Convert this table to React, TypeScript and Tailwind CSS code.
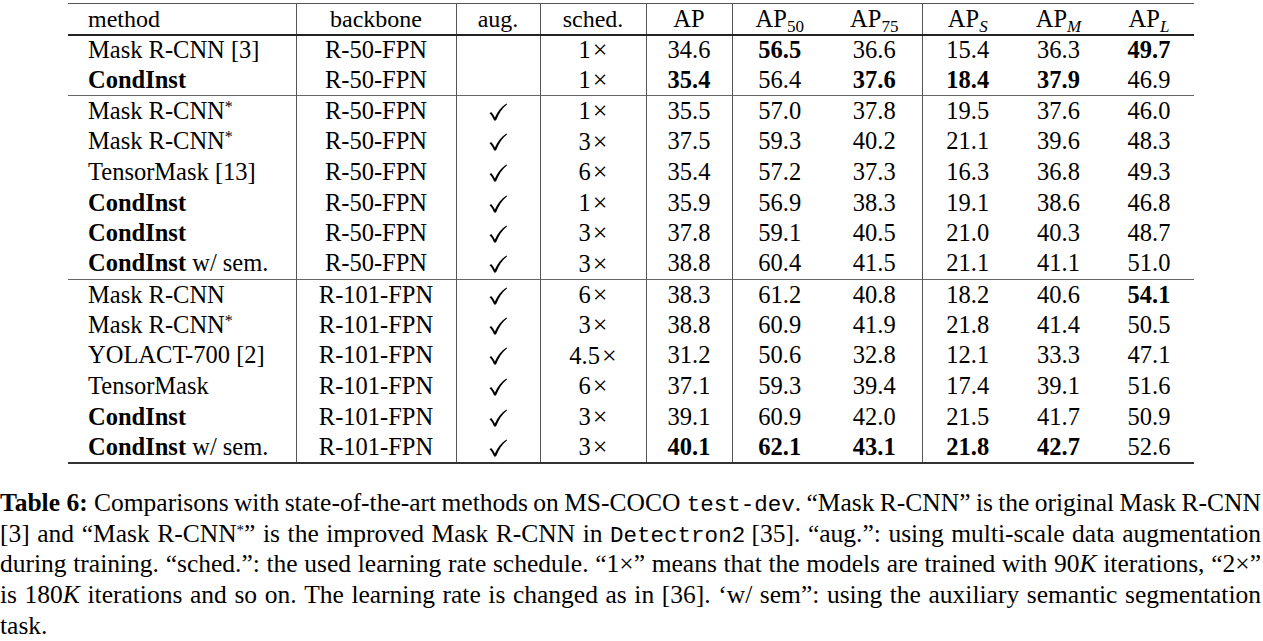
import React from "react";

type Cell = { t: string; b?: boolean };
type Row = {
  m: string;
  mb?: boolean;
  suffix?: string;
  bb: string;
  aug: boolean;
  s: string;
  v: Cell[];
};

const c = (t: string, b = false): Cell => ({ t, b });

const groups: Row[][] = [
  [
    { m: "Mask R-CNN [3]", bb: "R-50-FPN", aug: false, s: "1", v: [c("34.6"), c("56.5", true), c("36.6"), c("15.4"), c("36.3"), c("49.7", true)] },
    { m: "CondInst", mb: true, bb: "R-50-FPN", aug: false, s: "1", v: [c("35.4", true), c("56.4"), c("37.6", true), c("18.4", true), c("37.9", true), c("46.9")] },
  ],
  [
    { m: "Mask R-CNN*", bb: "R-50-FPN", aug: true, s: "1", v: [c("35.5"), c("57.0"), c("37.8"), c("19.5"), c("37.6"), c("46.0")] },
    { m: "Mask R-CNN*", bb: "R-50-FPN", aug: true, s: "3", v: [c("37.5"), c("59.3"), c("40.2"), c("21.1"), c("39.6"), c("48.3")] },
    { m: "TensorMask [13]", bb: "R-50-FPN", aug: true, s: "6", v: [c("35.4"), c("57.2"), c("37.3"), c("16.3"), c("36.8"), c("49.3")] },
    { m: "CondInst", mb: true, bb: "R-50-FPN", aug: true, s: "1", v: [c("35.9"), c("56.9"), c("38.3"), c("19.1"), c("38.6"), c("46.8")] },
    { m: "CondInst", mb: true, bb: "R-50-FPN", aug: true, s: "3", v: [c("37.8"), c("59.1"), c("40.5"), c("21.0"), c("40.3"), c("48.7")] },
    { m: "CondInst", mb: true, suffix: " w/ sem.", bb: "R-50-FPN", aug: true, s: "3", v: [c("38.8"), c("60.4"), c("41.5"), c("21.1"), c("41.1"), c("51.0")] },
  ],
  [
    { m: "Mask R-CNN", bb: "R-101-FPN", aug: true, s: "6", v: [c("38.3"), c("61.2"), c("40.8"), c("18.2"), c("40.6"), c("54.1", true)] },
    { m: "Mask R-CNN*", bb: "R-101-FPN", aug: true, s: "3", v: [c("38.8"), c("60.9"), c("41.9"), c("21.8"), c("41.4"), c("50.5")] },
    { m: "YOLACT-700 [2]", bb: "R-101-FPN", aug: true, s: "4.5", v: [c("31.2"), c("50.6"), c("32.8"), c("12.1"), c("33.3"), c("47.1")] },
    { m: "TensorMask", bb: "R-101-FPN", aug: true, s: "6", v: [c("37.1"), c("59.3"), c("39.4"), c("17.4"), c("39.1"), c("51.6")] },
    { m: "CondInst", mb: true, bb: "R-101-FPN", aug: true, s: "3", v: [c("39.1"), c("60.9"), c("42.0"), c("21.5"), c("41.7"), c("50.9")] },
    { m: "CondInst", mb: true, suffix: " w/ sem.", bb: "R-101-FPN", aug: true, s: "3", v: [c("40.1", true), c("62.1", true), c("43.1", true), c("21.8", true), c("42.7", true), c("52.6")] },
  ],
];

function MethodName({ r }: { r: Row }) {
  const star = r.m.endsWith("*");
  const base = star ? r.m.slice(0, -1) : r.m;
  return (
    <span>
      <span className={r.mb ? "font-bold" : ""}>{base}</span>
      {star && <span className="relative top-[-7px] text-[16px] leading-none">*</span>}
      {r.suffix && <span>{r.suffix}</span>}
    </span>
  );
}

function Sub({ children, italic }: { children: React.ReactNode; italic?: boolean }) {
  return (
    <span className={"relative top-[5px] text-[17px] leading-none " + (italic ? "italic" : "")}>{children}</span>
  );
}

function Check() {
  return (
    <svg width="20" height="20" viewBox="0 0 20 20" className="inline-block align-[-3px]">
      <path
        d="M1.5 11.2 L3.2 10 C4.6 11.4 5.8 13.3 6.9 15.4 C9.6 9.4 13.2 4.8 18.4 1.4 L19.1 2.3 C14.2 6.5 10.6 11.6 8 18.6 L6.1 18.6 C5 15.6 3.6 13.1 1.5 11.2 Z"
        fill="#000"
      />
    </svg>
  );
}

const mono = "font-['Liberation_Mono',monospace] text-[22.5px] leading-none";

export default function App() {
  const vr = "border-r border-r-[#555]";
  return (
    <div className="w-[1263px] h-[641px] bg-white text-black overflow-hidden font-['Liberation_Serif','Times_New_Roman',serif]">
      <div className="pt-[3px] pl-[68px]">
        <table className="table-fixed border-collapse w-[1126px] text-[24.5px] leading-none font-['Liberation_Serif',serif]">
          <colgroup>
            <col className="w-[228px]" />
            <col className="w-[160px]" />
            <col className="w-[84px]" />
            <col className="w-[106px]" />
            <col className="w-[86px]" />
            <col className="w-[95px]" />
            <col className="w-[95px]" />
            <col className="w-[91px]" />
            <col className="w-[91px]" />
            <col className="w-[90px]" />
          </colgroup>
          <thead>
            <tr className="h-[31px] border-t border-t-[#555] border-b-2 border-b-[#222]">
              <th className={"font-normal text-left pl-[20px] text-[24px] " + vr}>method</th>
              <th className={"font-normal text-center text-[24px] " + vr}>backbone</th>
              <th className={"font-normal text-center text-[24px] " + vr}>aug.</th>
              <th className={"font-normal text-center text-[24px] " + vr}>sched.</th>
              <th className={"font-normal text-center " + vr}>AP</th>
              <th className="font-normal text-center">AP<Sub>50</Sub></th>
              <th className={"font-normal text-center " + vr}>AP<Sub>75</Sub></th>
              <th className="font-normal text-center">AP<Sub italic>S</Sub></th>
              <th className="font-normal text-center">AP<Sub italic>M</Sub></th>
              <th className="font-normal text-center">AP<Sub italic>L</Sub></th>
            </tr>
          </thead>
          {groups.map((g, gi) => (
            <tbody
              key={gi}
              className={gi === groups.length - 1 ? "border-b-2 border-b-[#333]" : "border-b border-b-[#666]"}
            >
              {g.map((r, ri) => (
                <tr key={ri} className="h-[30.6px]">
                  <td className={"text-left pl-[20px] whitespace-nowrap " + vr}>
                    <MethodName r={r} />
                  </td>
                  <td className={"text-center " + vr}>{r.bb}</td>
                  <td className={"text-center " + vr}>{r.aug && <Check />}</td>
                  <td className={"text-center " + vr}>
                    {r.s}
                    <span className="text-[26px] ml-[2px]">×</span>
                  </td>
                  {r.v.map((cell, ci) => (
                    <td
                      key={ci}
                      className={
                        "text-center " +
                        (cell.b ? "font-bold " : "") +
                        (ci === 0 || ci === 2 ? vr : "")
                      }
                    >
                      {cell.t}
                    </td>
                  ))}
                </tr>
              ))}
            </tbody>
          ))}
        </table>
      </div>

      <div className="mt-[24px] w-[1261px] text-[25.5px] leading-[30.75px]">
        <div className="h-[30.75px] flex justify-between items-baseline whitespace-nowrap">
          <span><span className="font-bold">Table 6:</span> Comparisons</span>
          <span>with</span><span>state-of-the-art</span><span>methods</span><span>on</span>
          <span>MS-COCO <span className={mono}>test-dev</span>.</span>
          <span>“Mask</span><span>R-CNN”</span><span>is</span><span>the</span><span>original</span><span>Mask</span><span>R-CNN</span>
        </div>
        <div className="h-[30.75px] flex justify-between items-baseline whitespace-nowrap">
          <span>[3]</span><span>and</span><span>“Mask</span>
          <span>R-CNN<span className="relative top-[-7px] text-[15px] leading-none">*</span>”</span>
          <span>is</span><span>the</span><span>improved</span><span>Mask</span><span>R-CNN</span><span>in</span>
          <span><span className={mono}>Detectron2</span> [35].</span>
          <span>“aug.”:</span><span>using</span><span>multi-scale</span><span>data</span><span>augmentation</span>
        </div>
        <div className="h-[30.75px] flex justify-between items-baseline whitespace-nowrap">
          <span>during</span><span>training.</span><span>“sched.”:</span><span>the</span><span>used</span><span>learning</span><span>rate</span><span>schedule.</span>
          <span>“1×”</span><span>means</span><span>that</span><span>the</span><span>models</span><span>are</span><span>trained</span><span>with</span>
          <span>90<span className="italic">K</span></span><span>iterations,</span><span>“2×”</span>
        </div>
        <div className="h-[30.75px] flex justify-between items-baseline whitespace-nowrap">
          <span>is</span><span>180<span className="italic">K</span></span><span>iterations</span><span>and</span><span>so</span><span>on.</span>
          <span>The</span><span>learning</span><span>rate</span><span>is</span><span>changed</span><span>as</span><span>in</span><span>[36].</span>
          <span>‘w/</span><span>sem”:</span><span>using</span><span>the</span><span>auxiliary</span><span>semantic</span><span>segmentation</span>
        </div>
        <div className="h-[30.75px]">task.</div>
      </div>
    </div>
  );
}
